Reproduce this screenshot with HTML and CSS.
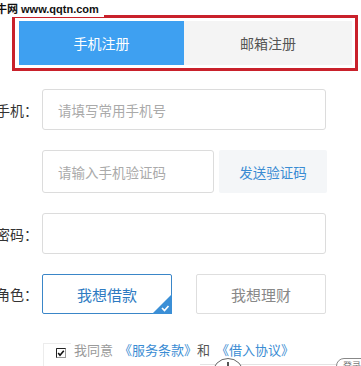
FILE: index.html
```html
<!DOCTYPE html>
<html lang="zh">
<head>
<meta charset="utf-8">
<link rel="stylesheet" href="styles.css">
</head>
<body>
<div class="page">
  <div class="watermark">牛网 www.qqtn.com</div>
  <div class="tabs-box">
    <div class="tabs">
      <div class="tab tab-active">手机注册</div>
      <div class="tab tab-idle">邮箱注册</div>
    </div>
  </div>

  <div class="form">
    <div class="row row-1">
      <div class="label">手机：</div>
      <div class="field field-full"><span class="ph">请填写常用手机号</span></div>
    </div>
    <div class="row row-2">
      <div class="label"></div>
      <div class="field field-code"><span class="ph">请输入手机验证码</span></div>
      <div class="send-btn">发送验证码</div>
    </div>
    <div class="row row-3">
      <div class="label">密码：</div>
      <div class="field field-full"></div>
    </div>
    <div class="row row-4">
      <div class="label">角色：</div>
      <div class="role role-on">我想借款
        <span class="corner">
          <svg width="20" height="20" viewBox="0 0 20 20"><polygon points="20,0 20,20 0,20" fill="#3b8fd6"/><polyline points="10,14 12.5,16.5 16.5,12" fill="none" stroke="#fff" stroke-width="1.7"/></svg>
        </span>
      </div>
      <div class="role role-off">我想理财</div>
    </div>
    <div class="row row-5">
      <div class="agree-box">
        <svg class="chk" width="10" height="10" viewBox="0 0 10 10"><rect x="0.5" y="0.5" width="9" height="9" fill="#fff" stroke="#999"/><path d="M0.5 9.5V0.5H9.5" fill="none" stroke="#222"/><polyline points="2.2,5 4,7.2 7.8,2.8" fill="none" stroke="#111" stroke-width="1.6"/></svg>
      </div>
      <div class="agree-text"><span class="gray">我同意</span> <span class="link">《服务条款》</span><span class="dark">和</span> <span class="link">《借入协议》</span></div>
    </div>
  </div>
  <div class="bottom">
    <div class="bottom-line"></div>
    <div class="circle"><span class="hand"></span></div>
    <div class="pill">登录注册</div>
  </div>
</div>
</body>
</html>
```

FILE: styles.css
```css
html, body {
  margin: 0;
  padding: 0;
  background: #fff;
}
body {
  font-family: "Noto Sans CJK SC", "Microsoft YaHei", sans-serif;
  width: 361px;
  height: 366px;
  overflow: hidden;
}
.page {
  position: relative;
  width: 361px;
  padding-top: 15px;
}
.watermark {
  position: absolute;
  left: -4px;
  top: 2px;
  padding-right: 5px;
  background: #fff;
  font-family: "Liberation Sans", "Noto Sans CJK SC", sans-serif;
  font-weight: bold;
  font-size: 11px;
  line-height: 15px;
  color: #111;
  z-index: 2;
}
.tabs-box {
  margin: 0 3px 0 12px;
  border: 3px solid #c9212b;
  padding: 3px 3px 3px 4px;
}
.tabs {
  display: flex;
  height: 44px;
}
.tab {
  display: flex;
  align-items: center;
  justify-content: center;
  font-size: 14px;
}
.tab-active {
  width: 165px;
  background: #3ea0f1;
  color: #fff;
}
.tab-idle {
  flex: 1;
  background: #f4f4f4;
  color: #555;
}
.form {
  padding-top: 18px;
}
.row {
  display: flex;
  align-items: center;
}
.label {
  width: 38px;
  flex: none;
  display: flex;
  justify-content: flex-end;
  white-space: nowrap;
  font-size: 14px;
  color: #333;
  margin-right: 4px;
}
.field {
  box-sizing: border-box;
  border: 1px solid #dcdcdc;
  border-radius: 3px;
  display: flex;
  align-items: center;
  padding-left: 15px;
  background: #fff;
}
.ph {
  font-size: 13.5px;
  color: #aaa;
}
.row-1 { height: 41px; }
.row-1 .field { height: 41px; }
.row-2 { height: 43px; margin-top: 20px; }
.row-2 .field { height: 43px; }
.row-3 { height: 41px; margin-top: 20px; }
.row-3 .field { height: 41px; }
.row-4 { height: 40px; margin-top: 20px; }
.field-full { width: 284px; }
.field-code { width: 172px; }
.send-btn {
  margin-left: 5px;
  width: 108px;
  height: 43px;
  background: #f4f6f8;
  border-radius: 2px;
  display: flex;
  align-items: center;
  justify-content: center;
  font-size: 13.5px;
  color: #3a8cd3;
}
.role {
  position: relative;
  box-sizing: border-box;
  width: 130px;
  height: 40px;
  border-radius: 2px;
  display: flex;
  align-items: center;
  justify-content: center;
  font-size: 15px;
}
.role-on {
  border: 1px solid #3a86c8;
  color: #2e7bc2;
}
.role-off {
  margin-left: 24px;
  border: 1px solid #dedede;
  color: #888;
}
.corner {
  position: absolute;
  right: -1px;
  bottom: -1px;
  width: 20px;
  height: 20px;
  display: block;
}
.corner svg { display: block; }
.row-5 {
  margin-top: 29px;
  align-items: flex-start;
}
.agree-box {
  margin-left: 43px;
  box-sizing: border-box;
  width: 28px;
  height: 30px;
  border: 1px solid #ececec;
  border-right: none;
  border-bottom: none;
  padding: 4px 0 0 12px;
}
.chk { display: block; }
.agree-text {
  margin-left: 3px;
  font-size: 13px;
  line-height: 16px;
  margin-top: -1px;
  white-space: nowrap;
  word-spacing: 3px;
}
.gray { color: #9a9a9a; }
.dark { color: #555; }
.link { color: #3a8cd3; }
.bottom {
  position: absolute;
  left: 0;
  top: 356px;
  width: 361px;
  height: 20px;
}
.bottom-line {
  position: absolute;
  left: 200px;
  right: 0;
  top: 8px;
  border-top: 1px solid #e3e3e3;
}
.circle {
  position: absolute;
  left: 212px;
  top: 2px;
  width: 32px;
  height: 32px;
  box-sizing: border-box;
  border: 1.5px solid #666;
  border-radius: 50%;
  background: #fff;
}
.hand {
  position: absolute;
  left: 14px;
  top: 3px;
  width: 1.5px;
  height: 8px;
  background: #555;
}
.pill {
  position: absolute;
  left: 336px;
  top: 2px;
  width: 60px;
  height: 20px;
  box-sizing: border-box;
  border: 1px solid #888;
  border-radius: 8px;
  background: #fff;
  font-size: 9px;
  color: #777;
  padding-left: 6px;
  line-height: 14px;
}
```
